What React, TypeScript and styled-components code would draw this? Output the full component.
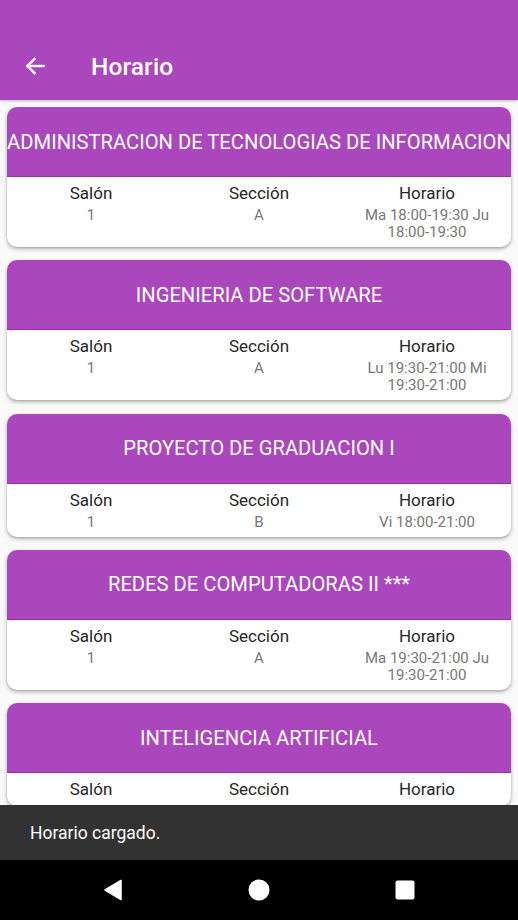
import React from "react";
import styled, { createGlobalStyle } from "styled-components";

const Global = createGlobalStyle`
  html, body { margin: 0; padding: 0; }
  body { font-family: Roboto, "Noto Sans", "Liberation Sans", sans-serif; background: #fff; }
`;

const Screen = styled.div`
  width: 518px;
  height: 920px;
  display: flex;
  flex-direction: column;
  overflow: hidden;
  background: #fafafa;
`;

const AppBar = styled.header`
  height: 100px;
  flex: 0 0 100px;
  background: #ab47bc;
  display: flex;
  align-items: flex-end;
  box-shadow: 0 1px 3px rgba(0,0,0,0.25);
  position: relative;
  z-index: 2;
`;

const BarRow = styled.div`
  height: 68px;
  display: flex;
  align-items: center;
  padding-left: 22px;
  gap: 43px;
`;

const Title = styled.h1`
  margin: 0;
  color: #fff;
  font-size: 24.5px;
  font-weight: 500;
  letter-spacing: 0.1px;
`;

const Content = styled.main`
  flex: 1;
  overflow: hidden;
  padding: 7px 7px 0;
  display: flex;
  flex-direction: column;
  gap: 13.3px;
`;

const Card = styled.section`
  flex: 0 0 auto;
  border-radius: 10px;
  overflow: hidden;
  background: #fff;
  box-shadow: 0 2px 4px rgba(0,0,0,0.28), 0 1px 2px rgba(0,0,0,0.12);
`;

const CardHeader = styled.div`
  height: 70px;
  background: #ab47bc;
  border-bottom: 1px solid #9a2fae;
  box-sizing: border-box;
  display: flex;
  align-items: center;
  justify-content: center;
  color: #fff;
  font-size: 20.2px;
  white-space: nowrap;
`;

const CardBody = styled.div`
  display: grid;
  grid-template-columns: repeat(3, 1fr);
  padding: 5px 0 6px;
`;

const Col = styled.div`
  display: flex;
  flex-direction: column;
  align-items: center;
  text-align: center;
`;

const Label = styled.div`
  font-size: 17px;
  line-height: 22px;
  color: #262626;
`;

const Value = styled.div`
  margin-top: 3px;
  font-size: 15px;
  line-height: 17px;
  color: #777;
  padding: 0 6px;
`;

const Snackbar = styled.div`
  flex: 0 0 55px;
  background: #323232;
  color: #fff;
  font-size: 17.5px;
  display: flex;
  align-items: center;
  padding-left: 30px;
`;

const NavBar = styled.nav`
  flex: 0 0 60px;
  background: #000;
  display: grid;
  grid-template-columns: 1fr 1fr 1fr;
  align-items: center;
  justify-items: center;
  padding: 0 40px;
`;

type Course = { name: string; salon?: string; sec?: string; hor?: string[] };

const courses: Course[] = [
  { name: "ADMINISTRACION DE TECNOLOGIAS DE INFORMACION", salon: "1", sec: "A", hor: ["Ma 18:00-19:30 Ju", "18:00-19:30"] },
  { name: "INGENIERIA DE SOFTWARE", salon: "1", sec: "A", hor: ["Lu 19:30-21:00 Mi", "19:30-21:00"] },
  { name: "PROYECTO DE GRADUACION I", salon: "1", sec: "B", hor: ["Vi 18:00-21:00"] },
  { name: "REDES DE COMPUTADORAS II ***", salon: "1", sec: "A", hor: ["Ma 19:30-21:00 Ju", "19:30-21:00"] },
  { name: "INTELIGENCIA ARTIFICIAL" },
];

export default function App() {
  return (
    <>
      <Global />
      <Screen>
        <AppBar>
          <BarRow>
            <svg width="26" height="26" viewBox="0 0 24 24" fill="none" stroke="#fff" strokeWidth="2.2" strokeLinecap="square">
              <path d="M20 12H5" />
              <path d="M11.5 5.5L5 12l6.5 6.5" />
            </svg>
            <Title>Horario</Title>
          </BarRow>
        </AppBar>
        <Content>
          {courses.map((c) => (
            <Card key={c.name}>
              <CardHeader>{c.name}</CardHeader>
              <CardBody>
                <Col>
                  <Label>Salón</Label>
                  {c.salon && <Value>{c.salon}</Value>}
                </Col>
                <Col>
                  <Label>Sección</Label>
                  {c.sec && <Value>{c.sec}</Value>}
                </Col>
                <Col>
                  <Label>Horario</Label>
                  {c.hor && (
                    <Value>
                      {c.hor.map((l) => (
                        <div key={l}>{l}</div>
                      ))}
                    </Value>
                  )}
                </Col>
              </CardBody>
            </Card>
          ))}
        </Content>
        <Snackbar>Horario cargado.</Snackbar>
        <NavBar>
          <svg width="20" height="22" viewBox="0 0 20 22">
            <path d="M18 1.5v19L2 11z" fill="#fff" stroke="#fff" strokeWidth="1.5" strokeLinejoin="round" />
          </svg>
          <svg width="22" height="22" viewBox="0 0 22 22">
            <circle cx="11" cy="11" r="10.5" fill="#fff" />
          </svg>
          <svg width="20" height="20" viewBox="0 0 20 20">
            <rect x="0.5" y="0.5" width="19" height="19" rx="2" fill="#fff" />
          </svg>
        </NavBar>
      </Screen>
    </>
  );
}
